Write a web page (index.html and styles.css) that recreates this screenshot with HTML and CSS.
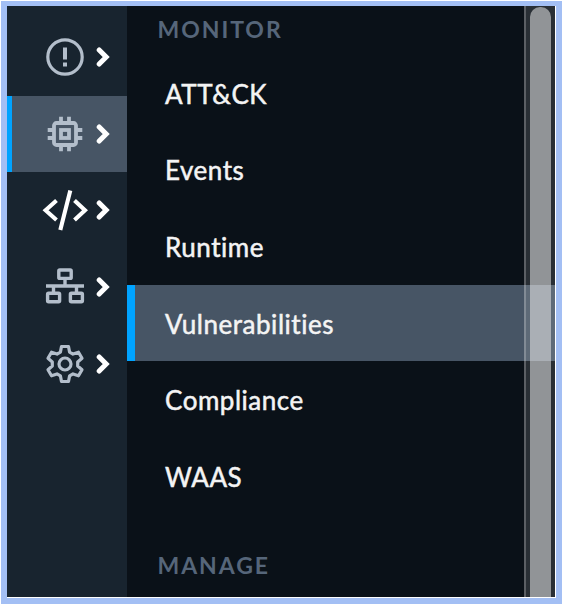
FILE: index.html
```
<!DOCTYPE html>
<html lang="en">
<head>
<meta charset="utf-8">
<title>Monitor</title>
<link rel="stylesheet" href="styles.css">
</head>
<body>
<div class="frame">
  <nav class="rail">
    <a class="rail-item">
      <svg class="icon" viewBox="0 0 44 44" fill="none" stroke="currentColor"><circle cx="22" cy="22" r="17.2" stroke-width="3.2"/><path d="M22 12.500v12M22 27.500v4" stroke-width="4"/></svg>
      <svg class="chevron" viewBox="0 0 14 22"><path d="M3.200 4l7 7-7 7"/></svg>
    </a>
    <a class="rail-item active">
      <svg class="icon" viewBox="0 0 44 44" fill="none" stroke="currentColor" stroke-width="3.800"><rect x="11" y="11" width="22" height="22" rx="2.500"/><rect x="18" y="18" width="8" height="8"/><path d="M18 4.700v6M26 4.700v6M18 33.300v6M26 33.300v6M4.700 18h6M4.700 26h6M33.300 18h6M33.300 26h6"/></svg>
      <svg class="chevron" viewBox="0 0 14 22"><path d="M3.200 4l7 7-7 7"/></svg>
    </a>
    <a class="rail-item bright">
      <svg class="icon" viewBox="0 0 44 44" fill="none" stroke="currentColor" stroke-width="4.100"><path d="M13.500 12.500L2.600 22.300l10.900 9.700M31.500 12.500L42 22.300 31.500 32M27.300 2.500L17.300 42"/></svg>
      <svg class="chevron" viewBox="0 0 14 22"><path d="M3.200 4l7 7-7 7"/></svg>
    </a>
    <a class="rail-item">
      <svg class="icon" viewBox="0 0 44 44" fill="none" stroke="currentColor" stroke-width="3.400"><rect x="15.800" y="5" width="12.400" height="8.400" rx="1"/><rect x="4.600" y="28.300" width="12" height="8.400" rx="1"/><rect x="27.400" y="28.300" width="12" height="8.400" rx="1"/><path d="M22 13v7M3 21h38M10.500 21v7M33.500 21v7"/></svg>
      <svg class="chevron" viewBox="0 0 14 22"><path d="M3.200 4l7 7-7 7"/></svg>
    </a>
    <a class="rail-item">
      <svg class="icon" viewBox="0 0 44 44" fill="none" stroke="currentColor" stroke-width="3.200" stroke-linejoin="round"><circle cx="22" cy="22" r="6"/><path d="M18.500 4.500h7l1.100 5.600 3.400 2 5.500-1.900 3.500 6-4.300 3.800v4l4.300 3.800-3.500 6-5.500-1.900-3.400 2-1.100 5.600h-7l-1.100-5.600-3.400-2-5.500 1.900-3.500-6 4.300-3.800v-4l-4.300-3.800 3.500-6 5.500 1.900 3.400-2z"/></svg>
      <svg class="chevron" viewBox="0 0 14 22"><path d="M3.200 4l7 7-7 7"/></svg>
    </a>
  </nav>
  <main class="menu">
    <h2 class="heading">MONITOR</h2>
    <a class="item"><span>ATT&amp;CK</span></a>
    <a class="item"><span>Events</span></a>
    <a class="item"><span>Runtime</span></a>
    <a class="item active"><span>Vulnerabilities</span></a>
    <a class="item"><span>Compliance</span></a>
    <a class="item"><span>WAAS</span></a>
    <h2 class="heading manage">MANAGE</h2>
    <div class="scrollbar"><div class="thumb"></div></div>
  </main>
</div>
</body>
</html>
```
FILE: styles.css
```
* { box-sizing: border-box; }
body { margin: 0; padding: 1px; background: #fff; font-family: Lato, sans-serif; }
.frame {
  display: flex;
  width: 561px;
  height: 603px;
  border: 6px solid #a3bff4;
  border-top-width: 5px;
  padding: 0 1px 1px 0;
}
.rail { width: 120px; padding-top: 13px; background: #18242f; flex: none; }
.rail-item {
  display: flex;
  align-items: center;
  height: 76.6px;
  padding-left: 35px;
  color: #b3becb;
  border-left: 0 solid #00a3ff;
}
.rail-item.active { background: #475565; border-left-width: 5px; padding-left: 30px; }
.rail-item.bright { color: #fff; }
.icon { width: 46px; height: 44px; flex: none; }
.chevron { width: 14px; height: 22px; margin-left: 8px; }
.chevron path { fill: none; stroke: #fff; stroke-width: 5; stroke-linecap: round; }
.menu { position: relative; flex: 1; overflow: hidden; background: #0a1118; }
.heading {
  display: flex;
  align-items: center;
  height: 49px;
  margin: 0;
  padding: 0 0 3px 30.5px;
  color: #56667a;
  font-size: 23px;
  font-weight: 700;
  letter-spacing: 1.95px;
}
.manage { height: 104px; }
.item {
  display: flex;
  align-items: center;
  height: 76.6px;
  padding: 1px 0 0 38px;
  color: #f4f4f4;
  font-size: 26px;
  letter-spacing: 0.53px;
  font-variant-ligatures: none;
  -webkit-text-stroke: 0.5px currentColor;
}
.item.active { background: #475565; border-left: 8px solid #00a3ff; padding-left: 30px; }
.scrollbar {
  position: absolute;
  top: 0;
  right: 0;
  bottom: 0;
  width: 31px;
  padding: 1px 4px 0 4px;
  border-left: 2px solid rgba(235, 235, 235, 0.26);
  background: rgba(235, 235, 235, 0.14);
}
.thumb { height: 100%; border-radius: 10px 10px 0 0; background: rgba(235, 235, 235, 0.54); }
```
